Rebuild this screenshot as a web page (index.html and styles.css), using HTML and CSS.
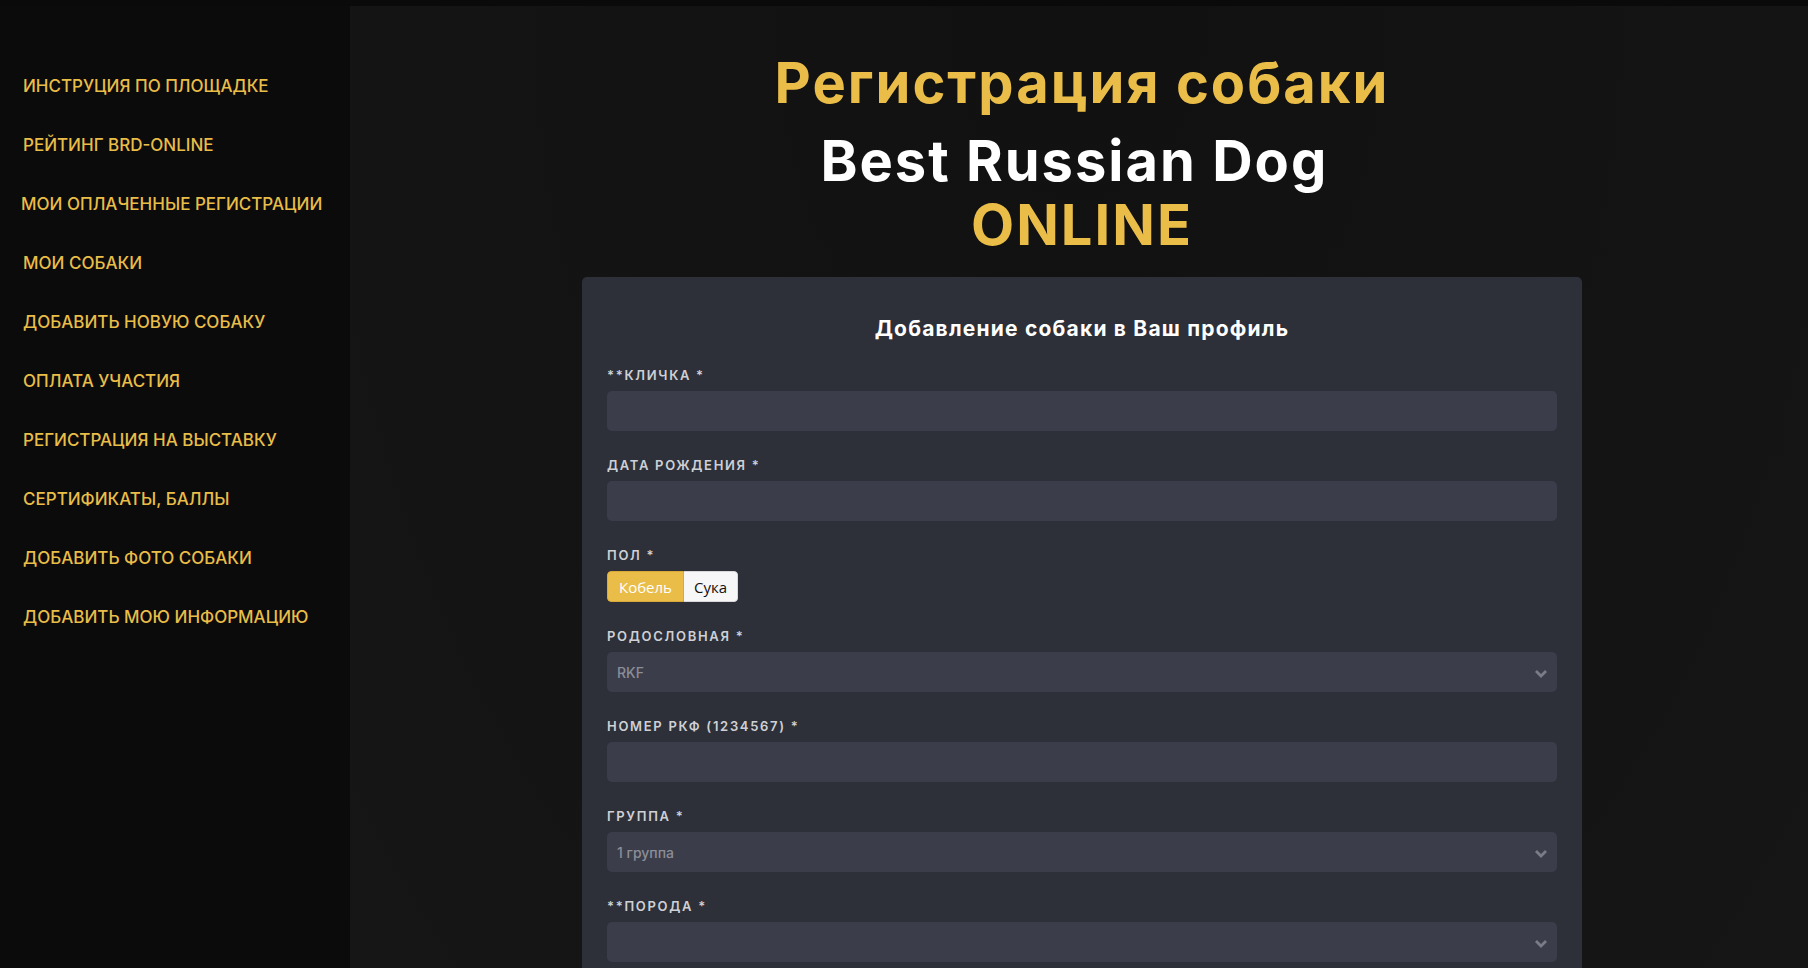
FILE: index.html
```html
<!DOCTYPE html>
<html lang="ru">
<head>
    <meta charset="UTF-8">
    <meta name="viewport" content="width=device-width, initial-scale=1.0">
    <title>Регистрация собаки</title>
    <link rel="stylesheet" href="styles.css">
</head>
<body>
    <div class="layout">
        <aside class="sidebar">
            <nav class="menu">
                <a href="#" class="menu-link">Инструция по площадке</a>
                <a href="#" class="menu-link">Рейтинг BRD-Online</a>
                <a href="#" class="menu-link menu-link-wide">Мои оплаченные регистрации</a>
                <a href="#" class="menu-link">Мои собаки</a>
                <a href="#" class="menu-link">Добавить новую собаку</a>
                <a href="#" class="menu-link">Оплата участия</a>
                <a href="#" class="menu-link">Регистрация на выставку</a>
                <a href="#" class="menu-link">Сертификаты, баллы</a>
                <a href="#" class="menu-link">Добавить фото собаки</a>
                <a href="#" class="menu-link">Добавить мою информацию</a>
            </nav>
        </aside>

        <main class="main">
            <h1 class="page-title">Регистрация собаки</h1>
            <div class="brand">Best Russian Dog&nbsp;<br><span class="brand-accent">ONLINE</span></div>

            <!-- Форма добавления собаки -->
            <form class="card">
                <h3 class="card-title">Добавление собаки в Ваш профиль</h3>

                <div class="field">
                    <label class="field-label">**Кличка *</label>
                    <input class="control" type="text">
                </div>

                <div class="field">
                    <label class="field-label">Дата рождения *</label>
                    <input class="control" type="text">
                </div>

                <div class="field">
                    <span class="field-label">Пол *</span>
                    <div class="toggle">
                        <button type="button" class="toggle-btn active">Кобель</button>
                        <button type="button" class="toggle-btn">Сука</button>
                    </div>
                </div>

                <div class="field">
                    <label class="field-label">Родословная *</label>
                    <div class="select-wrap">
                        <select class="control">
                            <option>RKF</option>
                        </select>
                        <svg class="select-arrow" width="14" height="9" viewBox="0 0 14 9"><path d="M2 2l5 5 5-5" fill="none" stroke="#7a7c87" stroke-width="2.8"/></svg>
                    </div>
                </div>

                <div class="field">
                    <label class="field-label">Номер РКФ (1234567) *</label>
                    <input class="control" type="text">
                </div>

                <div class="field">
                    <label class="field-label">Группа *</label>
                    <div class="select-wrap">
                        <select class="control">
                            <option>1 группа</option>
                        </select>
                        <svg class="select-arrow" width="14" height="9" viewBox="0 0 14 9"><path d="M2 2l5 5 5-5" fill="none" stroke="#7a7c87" stroke-width="2.8"/></svg>
                    </div>
                </div>

                <div class="field">
                    <label class="field-label">**Порода *</label>
                    <div class="select-wrap">
                        <select class="control">
                            <option></option>
                        </select>
                        <svg class="select-arrow" width="14" height="9" viewBox="0 0 14 9"><path d="M2 2l5 5 5-5" fill="none" stroke="#7a7c87" stroke-width="2.8"/></svg>
                    </div>
                </div>
            </form>
        </main>
    </div>
</body>
</html>
```

FILE: styles.css
```css
body {
    margin: 0;
    font-family: Inter, "Open Sans", sans-serif;
    background-color: #0a0a0a;
    border-top: 6px solid #0a0a0a;
}
.layout {
    display: flex;
    min-height: calc(100vh - 6px);
}
.sidebar {
    width: 350px;
    flex-shrink: 0;
    background-color: #0b0b0b;
}
.menu {
    display: flex;
    flex-direction: column;
    align-items: flex-start;
    padding: 51px 0 0 23px;
}
.menu-link {
    color: #e9bd48;
    text-decoration: none;
    text-transform: uppercase;
    font-size: 17px;
    font-weight: 500;
    line-height: 19px;
    padding: 20px 0;
}
.menu-link-wide {
    margin-left: -2px;
}
.main {
    flex: 1;
    padding: 45px 0 60px 6px;
    text-align: center;
    background: radial-gradient(ellipse at 50% 0%, #111111 0%, #131313 45%, #171616 100%);
}
.page-title {
    margin: 0;
    color: #e9bd48;
    font-size: 56px;
    font-weight: 700;
    line-height: 65px;
    letter-spacing: 2px;
}
.brand {
    margin-top: 13px;
    color: #ffffff;
    font-size: 56px;
    font-weight: 700;
    line-height: 64px;
    letter-spacing: 2px;
}
.brand-accent {
    color: #e9bd48;
}
.card {
    width: 1000px;
    box-sizing: border-box;
    margin: 20px auto 0;
    padding: 38px 25px 40px;
    background-color: #2d3038;
    border-radius: 5px;
    text-align: left;
}
.card-title {
    margin: 0 0 24px;
    text-align: center;
    color: #ffffff;
    font-size: 21px;
    font-weight: 700;
    line-height: 28px;
    letter-spacing: 1.2px;
}
.field {
    margin-bottom: 26px;
}
.field-label {
    display: block;
    margin-bottom: 8px;
    color: #cfd0d6;
    font-size: 13px;
    font-weight: 600;
    line-height: 16px;
    letter-spacing: 1.7px;
    text-transform: uppercase;
}
.control {
    display: block;
    width: 100%;
    height: 40px;
    box-sizing: border-box;
    padding: 0 10px;
    border: none;
    border-radius: 5px;
    background-color: #3b3d4a;
    color: #8b8d97;
    font-family: Inter, sans-serif;
    font-size: 14px;
    font-weight: 500;
    outline: none;
    appearance: none;
    -webkit-appearance: none;
}
.select-wrap {
    position: relative;
}
.select-arrow {
    position: absolute;
    right: 9px;
    top: 17px;
    pointer-events: none;
}
.toggle {
    display: inline-flex;
    border-radius: 4px;
    overflow: hidden;
}
.toggle-btn {
    height: 31px;
    margin: 0;
    padding: 0 10px;
    border: 1px solid #d9d9d9;
    background-color: #f7f7f7;
    color: #111111;
    font-family: "Open Sans", sans-serif;
    font-size: 15px;
    font-weight: 500;
    cursor: pointer;
}
.toggle-btn:first-child {
    padding: 0 11px;
    border-radius: 4px 0 0 4px;
}
.toggle-btn:last-child {
    border-left: none;
    border-radius: 0 4px 4px 0;
}
.toggle-btn.active {
    background-color: #e9bd48;
    border-color: #d9aa3a;
    color: #ffffff;
}
```
